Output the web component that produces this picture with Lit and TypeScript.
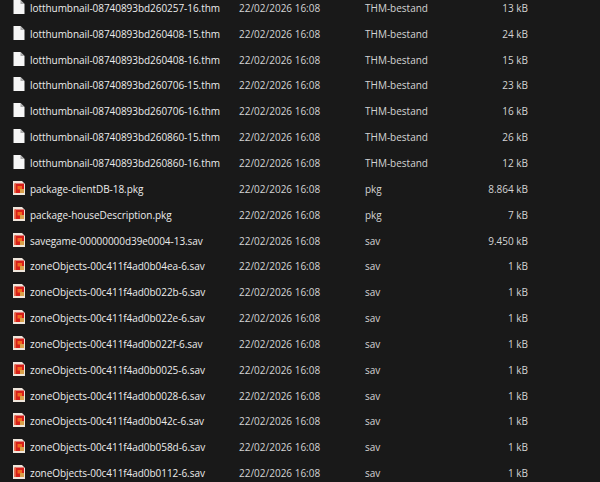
import { LitElement, html, css, svg } from "lit";
import { customElement } from "lit/decorators.js";

const DATE = "22/02/2026 16:08";
const rows: [string, string, string, string][] = [
  ["lotthumbnail-08740893bd260257-16.thm", "THM-bestand", "13 kB", "t"],
  ["lotthumbnail-08740893bd260408-15.thm", "THM-bestand", "24 kB", "t"],
  ["lotthumbnail-08740893bd260408-16.thm", "THM-bestand", "15 kB", "t"],
  ["lotthumbnail-08740893bd260706-15.thm", "THM-bestand", "23 kB", "t"],
  ["lotthumbnail-08740893bd260706-16.thm", "THM-bestand", "16 kB", "t"],
  ["lotthumbnail-08740893bd260860-15.thm", "THM-bestand", "26 kB", "t"],
  ["lotthumbnail-08740893bd260860-16.thm", "THM-bestand", "12 kB", "t"],
  ["package-clientDB-18.pkg", "pkg", "8.864 kB", "r"],
  ["package-houseDescription.pkg", "pkg", "7 kB", "r"],
  ["savegame-00000000d39e0004-13.sav", "sav", "9.450 kB", "r"],
  ["zoneObjects-00c411f4ad0b04ea-6.sav", "sav", "1 kB", "r"],
  ["zoneObjects-00c411f4ad0b022b-6.sav", "sav", "1 kB", "r"],
  ["zoneObjects-00c411f4ad0b022e-6.sav", "sav", "1 kB", "r"],
  ["zoneObjects-00c411f4ad0b022f-6.sav", "sav", "1 kB", "r"],
  ["zoneObjects-00c411f4ad0b0025-6.sav", "sav", "1 kB", "r"],
  ["zoneObjects-00c411f4ad0b0028-6.sav", "sav", "1 kB", "r"],
  ["zoneObjects-00c411f4ad0b042c-6.sav", "sav", "1 kB", "r"],
  ["zoneObjects-00c411f4ad0b058d-6.sav", "sav", "1 kB", "r"],
  ["zoneObjects-00c411f4ad0b0112-6.sav", "sav", "1 kB", "r"],
];

const plain = svg`<svg class="ic" width="12" height="14" viewBox="0 0 12 14">
  <path d="M0.5 0H7.5L11.5 4V14H0.5Z" fill="#f6f6f6"/>
  <path d="M7.5 0V4H11.5Z" fill="#a8a8a8"/>
</svg>`;
const red = svg`<svg class="ic" width="12" height="14" viewBox="0 0 12 14">
  <path d="M0 0H9L12 3V14H0Z" fill="#efe6dc"/>
  <rect x="1.5" y="2.5" width="9.5" height="9.5" fill="#d61f1a"/>
  <rect x="1.5" y="2.5" width="1.5" height="9.5" fill="#e8603a"/>
  <rect x="4.5" y="5" width="4.5" height="3.5" fill="#f26a1e"/>
  <rect x="7" y="8" width="4" height="4" fill="#d9a04a"/>
</svg>`;

@customElement("app-root")
export class AppRoot extends LitElement {
  static styles = css`
    :host { display: block; width: 600px; height: 482px; overflow: hidden; background: #191919; }
    .list { margin-top: -5px; font-family: "Open Sans", "Noto Sans", sans-serif; font-size: 10px; color: #d4d4d4; }
    .row { display: grid; grid-template-columns: 13px 17px 209px 126px 80px 83px; align-items: center; height: 25.85px; white-space: nowrap; }
    .ic { grid-column: 2; display: block; margin-bottom: 2px; }
    .name { color: #ececec; letter-spacing: -0.05px; }
    .size { text-align: right; }
  `;
  render() {
    return html`<div class="list">
      ${rows.map(([n, t, s, k]) => html`<div class="row">
        <span></span>
        ${k === "t" ? plain : red}
        <span class="name">${n}</span>
        <span>${DATE}</span>
        <span>${t}</span>
        <span class="size">${s}</span>
      </div>`)}
    </div>`;
  }
}
